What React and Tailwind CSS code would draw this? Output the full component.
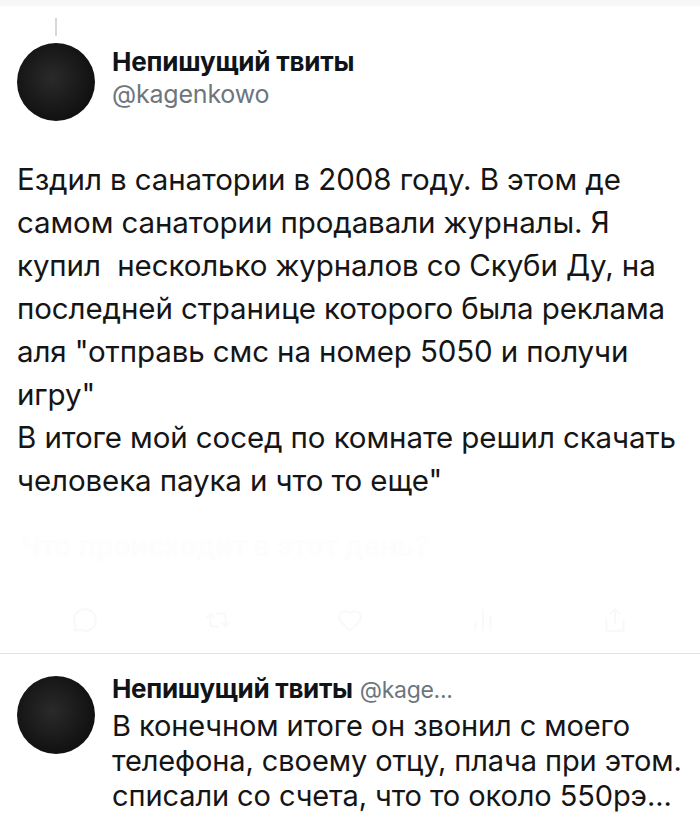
import React from "react";
import { MessageCircle, Repeat2, Heart, BarChart2, Share } from "lucide-react";

const mainLines = [
  "Ездил в санатории в 2008 году. В этом де",
  "самом санатории продавали журналы. Я",
  "купил\u00a0 несколько журналов со Скуби Ду, на",
  "последней странице которого была реклама",
  "аля \"отправь смс на номер 5050 и получи",
  "игру\"",
  "В итоге мой сосед по комнате решил скачать",
  "человека паука и что то еще\"",
];

const replyLines = [
  "В конечном итоге он звонил с моего",
  "телефона, своему отцу, плача при этом.",
  "списали со счета, что то около 550рэ...",
];

const Avatar = () => (
  <div className="w-[78px] h-[78px] shrink-0 rounded-full bg-[radial-gradient(circle_at_45%_45%,#2a2a2a,#111_70%)]" />
);

const App = () => {
  return (
    <div className="w-[700px] h-[820px] overflow-hidden bg-white text-[#0f1419] font-['Inter','Noto_Sans',sans-serif]">
      <div className="h-[6px] bg-[#f7f7f7]" />
      <div className="px-[17px] pt-[12px]">
        <div className="flex">
          <div className="flex flex-col items-center w-[78px]">
            <div className="w-[2px] h-[18px] bg-[#d4d9dd]" />
            <div className="mt-[7px]">
              <Avatar />
            </div>
          </div>
          <div className="ml-[17px] mt-[28px] flex flex-col">
            <span className="text-[26px] leading-[32px] font-bold tracking-[-0.2px]">Непишущий твиты</span>
            <span className="text-[25px] leading-[32px] text-[#6e767d] tracking-[-0.2px]">@kagenkowo</span>
          </div>
        </div>

        <div className="mt-[37px] flex flex-col text-[29.5px] leading-[43px] text-[#151515] tracking-[-0.1px]">
          {mainLines.map((l, i) => (
            <div key={i} className="whitespace-pre">
              {l}
            </div>
          ))}
        </div>

        <div className="h-[151px] flex flex-col justify-end">
          <div className="text-[28px] font-bold text-[#fdfdfd] pl-[4px] mb-[40px]">
            Что происходит в этот день?
          </div>
          <div className="flex justify-between px-[55px] pb-[20px] text-[#f9f9f9]">
            <MessageCircle size={26} />
            <Repeat2 size={26} />
            <Heart size={26} />
            <BarChart2 size={26} />
            <Share size={26} />
          </div>
        </div>
      </div>

      <div className="h-px bg-[#e3e3e3]" />

      <div className="px-[17px] pt-[22px] flex">
        <Avatar />
        <div className="ml-[17px] -mt-[5px] flex flex-col">
          <div className="flex items-baseline whitespace-nowrap">
            <span className="text-[26px] leading-[35px] font-bold tracking-[-0.3px]">Непишущий твиты</span>
            <span className="ml-[7px] text-[23px] text-[#6e767d] tracking-[-0.3px]">@kage...</span>
          </div>
          {replyLines.map((l, i) => (
            <div key={i} className="text-[29px] leading-[35px] text-[#151515] tracking-[-0.1px] whitespace-nowrap">
              {l}
            </div>
          ))}
        </div>
      </div>
    </div>
  );
};

export default App;
